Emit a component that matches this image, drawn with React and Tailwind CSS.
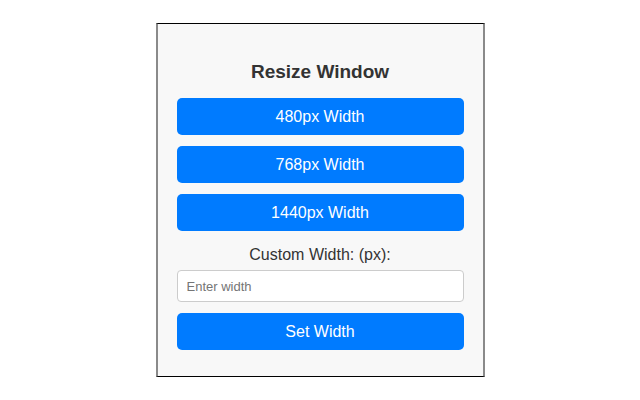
export default function App() {
  const sizes = ["480px Width", "768px Width", "1440px Width"];
  return (
    <div className="w-[640px] h-[400px] bg-white pt-[23px] font-['Liberation_Sans',Arial,sans-serif]">
      <div className="mx-auto w-[329px] h-[354px] bg-[#f8f8f8] border-y border-y-black border-x-2 border-x-[#8a8a8a] px-[19px] pt-[34px] flex flex-col">
        <h2 className="text-[19px] leading-[28px] font-bold text-[#333] text-center">Resize Window</h2>
        <div className="mt-[12px] flex flex-col gap-[11px]">
          {sizes.map((s) => (
            <button key={s} className="h-[37px] w-full rounded-[5px] bg-[#007bff] text-white text-[16px]">
              {s}
            </button>
          ))}
        </div>
        <label className="mt-[12px] text-[16px] leading-[24px] text-[#333] text-center">Custom Width: (px):</label>
        <input
          type="number"
          placeholder="Enter width"
          className="mt-[3px] h-[32px] w-full rounded-[4px] border border-[#ccc] bg-white px-[9px] text-[13px] text-[#333] placeholder:text-[#757575] outline-none"
        />
        <button className="mt-[11px] h-[37px] w-full rounded-[5px] bg-[#007bff] text-white text-[16px]">
          Set Width
        </button>
      </div>
    </div>
  );
}
